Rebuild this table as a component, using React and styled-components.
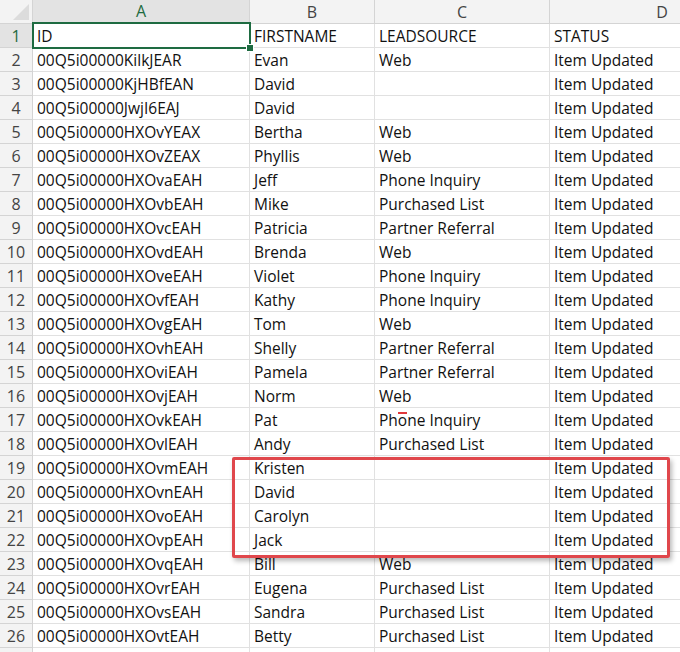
import React from "react";
import styled, { createGlobalStyle } from "styled-components";

const rows = [
  ["ID", "FIRSTNAME", "LEADSOURCE", "STATUS"],
  ["00Q5i00000KilkJEAR", "Evan", "Web", "Item Updated"],
  ["00Q5i00000KjHBfEAN", "David", "", "Item Updated"],
  ["00Q5i00000JwjI6EAJ", "David", "", "Item Updated"],
  ["00Q5i00000HXOvYEAX", "Bertha", "Web", "Item Updated"],
  ["00Q5i00000HXOvZEAX", "Phyllis", "Web", "Item Updated"],
  ["00Q5i00000HXOvaEAH", "Jeff", "Phone Inquiry", "Item Updated"],
  ["00Q5i00000HXOvbEAH", "Mike", "Purchased List", "Item Updated"],
  ["00Q5i00000HXOvcEAH", "Patricia", "Partner Referral", "Item Updated"],
  ["00Q5i00000HXOvdEAH", "Brenda", "Web", "Item Updated"],
  ["00Q5i00000HXOveEAH", "Violet", "Phone Inquiry", "Item Updated"],
  ["00Q5i00000HXOvfEAH", "Kathy", "Phone Inquiry", "Item Updated"],
  ["00Q5i00000HXOvgEAH", "Tom", "Web", "Item Updated"],
  ["00Q5i00000HXOvhEAH", "Shelly", "Partner Referral", "Item Updated"],
  ["00Q5i00000HXOviEAH", "Pamela", "Partner Referral", "Item Updated"],
  ["00Q5i00000HXOvjEAH", "Norm", "Web", "Item Updated"],
  ["00Q5i00000HXOvkEAH", "Pat", "PHONE_MARK", "Item Updated"],
  ["00Q5i00000HXOvlEAH", "Andy", "Purchased List", "Item Updated"],
  ["00Q5i00000HXOvmEAH", "Kristen", "", "Item Updated"],
  ["00Q5i00000HXOvnEAH", "David", "", "Item Updated"],
  ["00Q5i00000HXOvoEAH", "Carolyn", "", "Item Updated"],
  ["00Q5i00000HXOvpEAH", "Jack", "", "Item Updated"],
  ["00Q5i00000HXOvqEAH", "Bill", "Web", "Item Updated"],
  ["00Q5i00000HXOvrEAH", "Eugena", "Purchased List", "Item Updated"],
  ["00Q5i00000HXOvsEAH", "Sandra", "Purchased List", "Item Updated"],
  ["00Q5i00000HXOvtEAH", "Betty", "Purchased List", "Item Updated"],
  ["", "", "", ""],
];

const letters = ["A", "B", "C", "D"];

const Global = createGlobalStyle`
  html, body { margin: 0; padding: 0; background: #fff; overflow: hidden; }
  body { font-family: "Open Sans", "Noto Sans", sans-serif; }
`;

const Viewport = styled.div`
  width: 680px;
  height: 652px;
  overflow: hidden;
`;

const Sheet = styled.div`
  position: relative;
  display: grid;
  grid-template-columns: 33px 217px 125px 175px 225px;
  grid-auto-rows: 24px;
  width: 775px;
`;

const Corner = styled.div`
  background: #f3f3f3;
  border-right: 1px solid #d4d4d4;
  border-bottom: 1px solid #d4d4d4;
  position: relative;
  &::after {
    content: "";
    position: absolute;
    right: 3px;
    bottom: 3px;
    border-left: 16px solid transparent;
    border-bottom: 16px solid #dcdcdc;
  }
`;

const ColHead = styled.div`
  display: flex;
  align-items: center;
  justify-content: center;
  font-size: 16px;
  background: ${(p) => (p.$active ? "#e3e3e3" : "#f3f3f3")};
  color: ${(p) => (p.$active ? "#1e6b41" : "#444")};
  border-right: 1px solid #d4d4d4;
  border-bottom: ${(p) => (p.$active ? "2px solid #1e6b41" : "1px solid #d4d4d4")};
`;

const RowHead = styled.div`
  display: flex;
  align-items: center;
  justify-content: center;
  font-size: 16px;
  background: ${(p) => (p.$active ? "#e3e3e3" : "#f3f3f3")};
  color: ${(p) => (p.$active ? "#1e6b41" : "#444")};
  border-right: 1px solid #d4d4d4;
  border-bottom: 1px solid #d4d4d4;
`;

const Cell = styled.div`
  display: flex;
  align-items: center;
  padding-left: 4px;
  font-size: 15.5px;
  color: #111;
  white-space: nowrap;
  overflow: hidden;
  border-right: 1px solid #e1e1e1;
  border-bottom: 1px solid #e1e1e1;
`;

const Marked = styled.span`
  position: relative;
  &::before {
    content: "";
    position: absolute;
    left: 0;
    right: 0;
    top: 3px;
    height: 2px;
    background: #e0383c;
  }
`;

const Selection = styled.div`
  position: absolute;
  left: 32px;
  top: 22px;
  width: 215px;
  height: 23px;
  border: 2px solid #1e6b41;
  pointer-events: none;
  &::after {
    content: "";
    position: absolute;
    right: -5px;
    bottom: -5px;
    width: 6px;
    height: 6px;
    background: #1e6b41;
    border: 1px solid #fff;
  }
`;

const Highlight = styled.div`
  position: absolute;
  left: 232px;
  top: 457px;
  width: 432px;
  height: 95px;
  border: 3px solid #e0474c;
  border-radius: 2px;
  box-shadow: 2px 3px 5px rgba(0, 0, 0, 0.28);
  pointer-events: none;
`;

const renderValue = (v) =>
  v === "PHONE_MARK" ? (
    <>
      Ph<Marked>o</Marked>ne Inquiry
    </>
  ) : (
    v
  );

export default function App() {
  return (
    <Viewport>
      <Global />
      <Sheet>
        <Corner />
        {letters.map((l, i) => (
          <ColHead key={l} $active={i === 0}>
            {l}
          </ColHead>
        ))}
        {rows.map((r, ri) => (
          <React.Fragment key={ri}>
            <RowHead $active={ri === 0}>{ri < 26 ? ri + 1 : ""}</RowHead>
            {r.map((v, ci) => (
              <Cell key={ci}>{renderValue(v)}</Cell>
            ))}
          </React.Fragment>
        ))}
        <Selection />
        <Highlight />
      </Sheet>
    </Viewport>
  );
}
